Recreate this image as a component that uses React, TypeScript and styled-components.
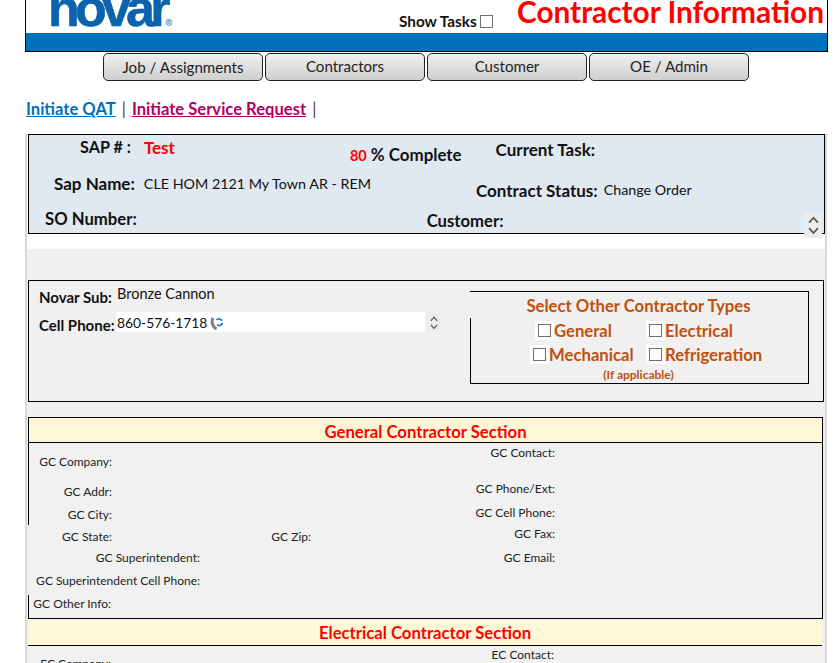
import * as React from "react";
import styled, { createGlobalStyle } from "styled-components";

const Global = createGlobalStyle`
  html, body {
    margin: 0;
    padding: 0;
    height: 663px;
    overflow: hidden;
    background: #fff;
    font-family: "Lato", "Open Sans", sans-serif;
    color: #111;
  }
`;

const Page = styled.div`
  width: 835px;
  height: 663px;
  overflow: hidden;
  padding-left: 25px;
  box-sizing: border-box;
`;

const Header = styled.header`
  width: 803px;
  height: 52px;
  box-sizing: border-box;
  border: 1px solid #000;
  border-top: 0;
  display: flex;
  flex-direction: column;
`;

const HeaderTop = styled.div`
  height: 33px;
  flex: none;
  display: flex;
  align-items: flex-start;
  overflow: hidden;
`;

const Logo = styled.div`
  font-family: "Liberation Sans", sans-serif;
  font-weight: 700;
  font-size: 52px;
  letter-spacing: -4.8px;
  line-height: 52px;
  color: #0b63ad;
  margin: -18px 0 0 22px;
  width: 124px;
  flex: none;
  -webkit-text-stroke: 0.6px #0b63ad;
`;

const LogoMark = styled.span`
  font-size: 9px;
  letter-spacing: 0;
  color: #6f9fd0;
  -webkit-text-stroke: 0.3px #6f9fd0;
`;

const ShowTasks = styled.label`
  display: flex;
  align-items: center;
  font-size: 15.300px;
  font-weight: 700;
  margin: 12px 0 0 227px;
  width: 118px;
  flex: none;
  color: #111;
`;

const Box = styled.span`
  display: block;
  width: 13px;
  height: 13px;
  box-sizing: border-box;
  border: 1px solid #707070;
  background: #fff;
  flex: none;
`;

const TaskBox = styled(Box)`
  margin: 0 24px 0 auto;
`;

const Title = styled.h1`
  margin: 0;
  font-size: 29.800px;
  line-height: 24px;
  font-weight: 700;
  color: #ff0000;
  white-space: nowrap;
`;

const Band = styled.div`
  flex: 1;
  background: #0070ba;
`;

const Nav = styled.nav`
  display: flex;
  gap: 2px;
  padding: 1px 0 0 78px;
`;

const NavButton = styled.button<{ $low?: boolean }>`
  width: 160px;
  height: 28px;
  box-sizing: border-box;
  border: 1px solid #222;
  border-radius: 5px;
  background: linear-gradient(#f0f0f0, #cfcfcf);
  font-family: inherit;
  font-size: 15.100px;
  color: #222;
  padding: 0 0 ${(p) => (p.$low ? "0" : "2px")};
`;

const Links = styled.div`
  display: flex;
  align-items: center;
  height: 20px;
  margin-top: 18px;
  padding-left: 1px;
  font-size: 16.600px;
  font-weight: 700;
`;

const Link = styled.a<{ $color: string }>`
  color: ${(p) => p.$color};
  text-decoration: underline;
`;

const Pipe = styled.span`
  color: #5a3a12;
  font-weight: 400;
  margin: 0 6px;
`;

const Main = styled.main`
  width: 802px;
  margin-top: 15px;
  box-sizing: border-box;
  border-left: 2px solid #d8d8d8;
  border-right: 2px solid #d8d8d8;
  padding-left: 1px;
  background: linear-gradient(#fff 115px, #f0f0f0 115px);
  height: 540px;
`;

const Summary = styled.section`
  width: 797px;
  height: 100px;
  box-sizing: border-box;
  border: 1px solid #000;
  background: #e0e8f1;
  position: relative;
`;

const SummaryRow = styled.div<{ $h: number }>`
  display: flex;
  height: ${(p) => p.$h}px;
`;

const SummaryLabel = styled.div<{ $ml?: number; $mt?: number; $color?: string; $size?: number }>`
  margin-left: ${(p) => p.$ml ?? 0}px;
  margin-top: ${(p) => p.$mt ?? 0}px;
  color: ${(p) => p.$color ?? "#111"};
  font-weight: 700;
  font-size: ${(p) => p.$size ?? 17}px;
  line-height: 20px;
  white-space: nowrap;
  height: 20px;
`;

const SummaryValue = styled(SummaryLabel)`
  font-weight: 400;
  font-size: 14.300px;
`;

const Red = styled.span`
  color: #ff0000;
  font-size: 14.500px;
`;

const Spinner = styled.div<{ $compact?: boolean }>`
  position: absolute;
  width: ${(p) => (p.$compact ? 14 : 18)}px;
  height: ${(p) => (p.$compact ? 20 : 25)}px;
  background: #ececec;
  display: flex;
  flex-direction: column;
  align-items: center;
  justify-content: center;
  gap: ${(p) => (p.$compact ? 2 : 3)}px;
  right: ${(p) => (p.$compact ? "382px" : "2px")};
  top: ${(p) => (p.$compact ? "32px" : "78px")};
`;

const Sub = styled.section`
  width: 796px;
  height: 122px;
  margin-top: 46px;
  box-sizing: border-box;
  border: 1px solid #000;
  background: #f0f0f0;
  position: relative;
  display: flex;
  align-items: flex-start;
  padding: 3px 0 0 10px;
`;

const SubLeft = styled.div`
  width: 431px;
  flex: none;
`;

const SubRow = styled.div<{ $mt?: number }>`
  display: flex;
  align-items: center;
  height: 20px;
  margin-top: ${(p) => p.$mt ?? 0}px;
`;

const SubLabel = styled.span`
  width: 77px;
  flex: none;
  font-size: 15px;
  font-weight: 700;
  white-space: nowrap;
  padding-top: 5px;
`;

const SubValue = styled.div`
  flex: none;
  font-size: 14.500px;
  height: 20px;
  line-height: 18px;
  width: 309px;
  padding-left: 1px;
  box-sizing: border-box;
  display: flex;
  align-items: center;
`;

const PhoneField = styled(SubValue)`
  background: #fff;
  font-size: 13.800px;
  gap: 3px;
  padding-top: 1px;
`;

const Types = styled.fieldset`
  width: 339px;
  height: 93px;
  box-sizing: border-box;
  margin: 7px 0 0;
  padding: 4px 0 0;
  border: 1px solid #000;
  border-left: 0;
  position: relative;
  color: #c0500c;
  text-align: center;
  &::before {
    content: "";
    position: absolute;
    left: 0;
    top: 26px;
    bottom: -1px;
    width: 1px;
    background: #000;
  }
`;

const TypesTitle = styled.div`
  font-size: 16.700px;
  font-weight: 700;
  line-height: 20px;
  padding-right: 1px;
`;

const TypeRow = styled.div<{ $mt?: number }>`
  display: flex;
  margin-top: ${(p) => p.$mt ?? 0}px;
  height: 19px;
`;

const TypeItem = styled.label<{ $w: number; $ml?: number }>`
  display: flex;
  align-items: center;
  width: ${(p) => p.$w}px;
  margin-left: ${(p) => p.$ml ?? 0}px;
  font-size: 16.700px;
  font-weight: 700;
  flex: none;
`;

const BoxWrap = styled.span`
  width: 19px;
  height: 19px;
  background: #fff;
  display: flex;
  align-items: center;
  justify-content: center;
  flex: none;
`;

const Hint = styled.div`
  font-size: 12px;
  font-weight: 700;
  line-height: 14px;
  margin-top: 4px;
  padding-right: 1px;
`;

const Section = styled.section`
  width: 795px;
  height: 202px;
  box-sizing: border-box;
  border: 1px solid #000;
  position: relative;
  background: #f1f1f1;
  margin-top: 15px;
  &::after {
    content: "";
    position: absolute;
    left: -1px;
    top: 107px;
    width: 1px;
    height: 70px;
    background: #f1f1f1;
  }
`;

const SectionHead = styled.h2`
  margin: 0;
  height: 25px;
  line-height: 28px;
  box-sizing: border-box;
  border-bottom: 1px solid #000;
  background: #fff8d6;
  color: #ff0000;
  font-size: 16.700px;
  font-weight: 700;
  text-align: center;
`;

const NextSection = styled.section`
  width: 794px;
  margin-top: 2px;
  height: 100px;
  background: #f1f1f1;
`;

const NextHead = styled(SectionHead)`
  line-height: 24px;
  margin-bottom: -1px;
`;

const Columns = styled.div`
  display: flex;
  padding-top: 1px;
`;

const FieldColumn = styled.div<{ $w: number }>`
  width: ${(p) => p.$w}px;
  flex: none;
`;

const FieldRow = styled.div<{ $mt?: number }>`
  display: flex;
  height: 18px;
  margin-top: ${(p) => p.$mt ?? 0}px;
`;

const FieldLabel = styled.span<{ $w: number }>`
  width: ${(p) => p.$w}px;
  flex: none;
  text-align: right;
  font-size: 12px;
  line-height: 18px;
  color: #222;
  white-space: nowrap;
`;

function Chevrons({ size }: { size: number }) {
  return (
    <>
      <svg width={size} height={size * 0.7} viewBox="0 0 10 7" fill="none" stroke="#555" strokeWidth="1.5">
        <path d="M1 6 5 1.5 9 6" />
      </svg>
      <svg width={size} height={size * 0.7} viewBox="0 0 10 7" fill="none" stroke="#555" strokeWidth="1.5">
        <path d="M1 1 5 5.5 9 1" />
      </svg>
    </>
  );
}

function PhoneSync() {
  return (
    <svg width="14" height="14" viewBox="0 0 14 14" fill="none">
      <path d="M3 2C1 6 2.500 11 6.500 13" stroke="#808080" strokeWidth="3" />
      <path d="M6.500 4A3.200 3.200 0 0 1 12 5M12.500 7A3.200 3.200 0 0 1 7 8.500" stroke="#1a7fd0" strokeWidth="1.800" />
    </svg>
  );
}

function ContractorFields({ prefix }: { prefix: string }) {
  return (
    <Columns>
      <FieldColumn $w={274}>
        <FieldRow $mt={9}>
          <FieldLabel $w={83}>{prefix} Company:</FieldLabel>
        </FieldRow>
        <FieldRow $mt={12}>
          <FieldLabel $w={83}>{prefix} Addr:</FieldLabel>
        </FieldRow>
        <FieldRow $mt={5}>
          <FieldLabel $w={83}>{prefix} City:</FieldLabel>
        </FieldRow>
        <FieldRow $mt={4}>
          <FieldLabel $w={83}>{prefix} State:</FieldLabel>
          <FieldLabel $w={199}>{prefix} Zip:</FieldLabel>
        </FieldRow>
        <FieldRow $mt={3}>
          <FieldLabel $w={171}>{prefix} Superintendent:</FieldLabel>
        </FieldRow>
        <FieldRow $mt={5}>
          <FieldLabel $w={171}>{prefix} Superintendent Cell Phone:</FieldLabel>
        </FieldRow>
        <FieldRow $mt={5}>
          <FieldLabel $w={82}>{prefix} Other Info:</FieldLabel>
        </FieldRow>
      </FieldColumn>
      <FieldColumn $w={400}>
        <FieldRow>
          <FieldLabel $w={252}>{prefix} Contact:</FieldLabel>
        </FieldRow>
        <FieldRow $mt={18}>
          <FieldLabel $w={252}>{prefix} Phone/Ext:</FieldLabel>
        </FieldRow>
        <FieldRow $mt={6}>
          <FieldLabel $w={252}>{prefix} Cell Phone:</FieldLabel>
        </FieldRow>
        <FieldRow $mt={3}>
          <FieldLabel $w={252}>{prefix} Fax:</FieldLabel>
        </FieldRow>
        <FieldRow $mt={6}>
          <FieldLabel $w={252}>{prefix} Email:</FieldLabel>
        </FieldRow>
      </FieldColumn>
    </Columns>
  );
}

export default function App() {
  return (
    <Page>
      <Global />
      <Header>
        <HeaderTop>
          <Logo>
            novar<LogoMark>®</LogoMark>
          </Logo>
          <ShowTasks>
            Show Tasks
            <TaskBox />
          </ShowTasks>
          <Title>Contractor Information</Title>
        </HeaderTop>
        <Band />
      </Header>

      <Nav>
        <NavButton $low>Job / Assignments</NavButton>
        <NavButton>Contractors</NavButton>
        <NavButton>Customer</NavButton>
        <NavButton>OE / Admin</NavButton>
      </Nav>

      <Links>
        <Link $color="#0070ba">Initiate QAT</Link>
        <Pipe>|</Pipe>
        <Link $color="#b3005f">Initiate Service Request</Link>
        <Pipe>|</Pipe>
      </Links>

      <Main>
        <Summary>
          <SummaryRow $h={35}>
            <SummaryLabel $ml={51} $mt={2} $size={16.2}>SAP # :</SummaryLabel>
            <SummaryLabel $ml={13} $mt={3} $color="#ff0000">Test</SummaryLabel>
            <SummaryLabel $ml={175} $mt={10} $size={16.9}>
              <Red>80</Red> % Complete
            </SummaryLabel>
            <SummaryLabel $ml={34} $mt={5}>Current Task:</SummaryLabel>
          </SummaryRow>
          <SummaryRow $h={36}>
            <SummaryLabel $ml={25} $mt={4}>Sap Name:</SummaryLabel>
            <SummaryValue $ml={9} $mt={4}>CLE HOM 2121 My Town AR - REM</SummaryValue>
            <SummaryLabel $ml={105} $mt={11}>Contract Status:</SummaryLabel>
            <SummaryValue $ml={6} $mt={10}>Change Order</SummaryValue>
          </SummaryRow>
          <SummaryRow $h={27}>
            <SummaryLabel $ml={16} $mt={3} $size={16.7}>SO Number:</SummaryLabel>
            <SummaryLabel $ml={290} $mt={5} $size={16.7}>Customer:</SummaryLabel>
          </SummaryRow>
          <Spinner>
            <Chevrons size={11} />
          </Spinner>
        </Summary>

        <Sub>
          <SubLeft>
            <SubRow>
              <SubLabel>Novar Sub:</SubLabel>
              <SubValue>Bronze Cannon</SubValue>
            </SubRow>
            <SubRow $mt={8}>
              <SubLabel>Cell Phone:</SubLabel>
              <PhoneField>
                860-576-1718
                <PhoneSync />
              </PhoneField>
            </SubRow>
          </SubLeft>
          <Types>
            <TypesTitle>Select Other Contractor Types</TypesTitle>
            <TypeRow $mt={5}>
              <TypeItem $w={111} $ml={65}>
                <BoxWrap><Box /></BoxWrap>General
              </TypeItem>
              <TypeItem $w={110}>
                <BoxWrap><Box /></BoxWrap>Electrical
              </TypeItem>
            </TypeRow>
            <TypeRow $mt={5}>
              <TypeItem $w={116} $ml={60}>
                <BoxWrap><Box /></BoxWrap>Mechanical
              </TypeItem>
              <TypeItem $w={120}>
                <BoxWrap><Box /></BoxWrap>Refrigeration
              </TypeItem>
            </TypeRow>
            <Hint>(If applicable)</Hint>
          </Types>
          <Spinner $compact>
            <Chevrons size={8} />
          </Spinner>
        </Sub>

        <Section>
          <SectionHead>General Contractor Section</SectionHead>
          <ContractorFields prefix="GC" />
        </Section>

        <NextSection>
          <NextHead>Electrical Contractor Section</NextHead>
          <ContractorFields prefix="EC" />
        </NextSection>
      </Main>
    </Page>
  );
}
